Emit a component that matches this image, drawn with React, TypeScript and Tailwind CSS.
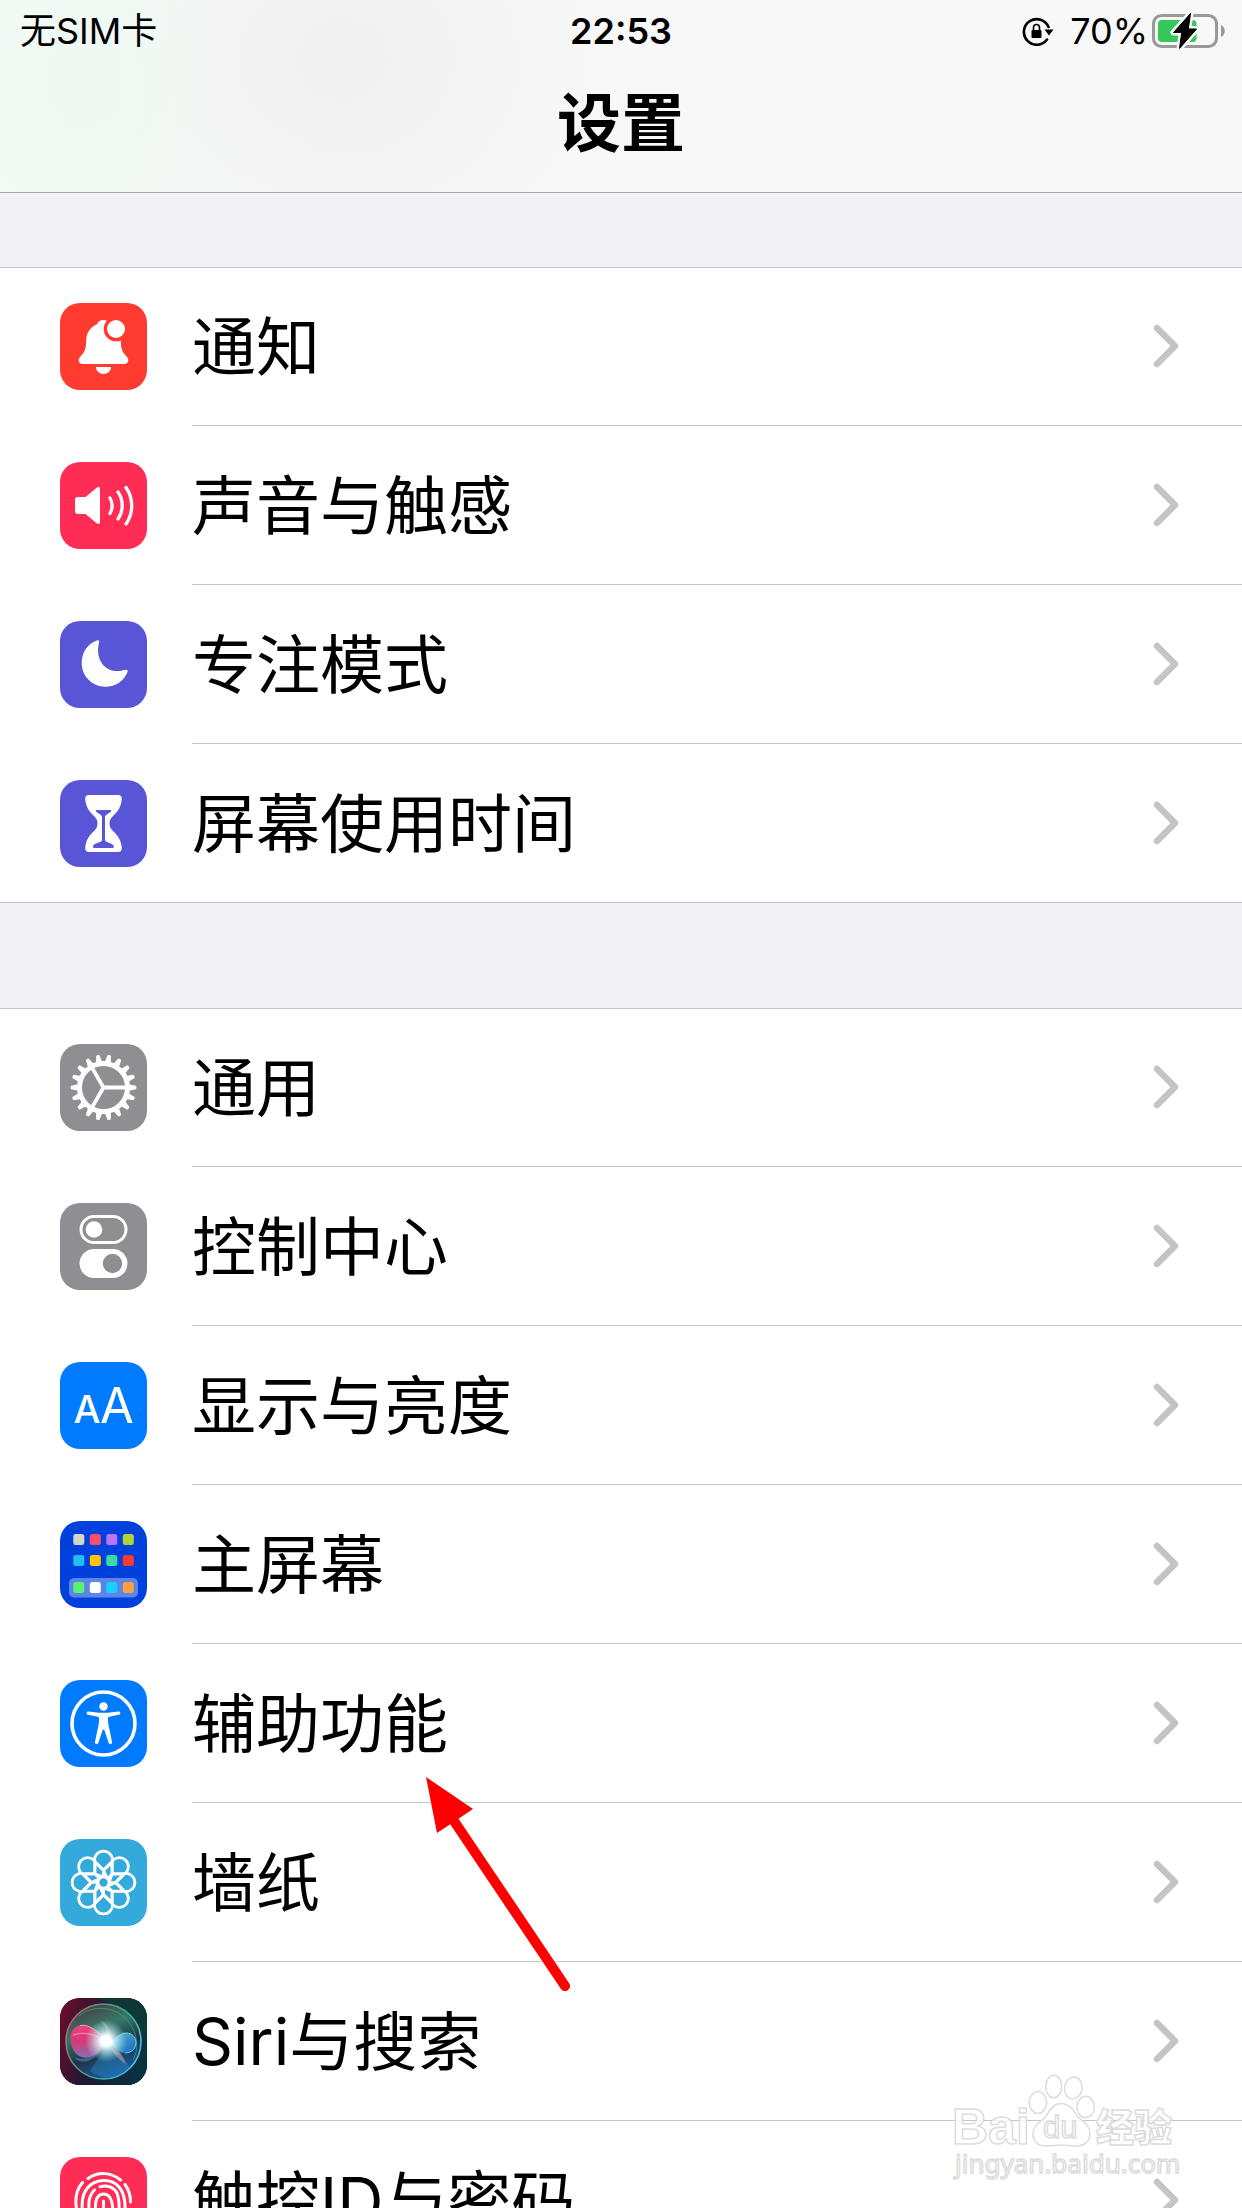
import type { ReactNode } from 'react'

interface SettingItem {
  label: string
  color: string
  icon: ReactNode
  hasPointer?: boolean
}

const toothAngles = Array.from({ length: 18 }, (_, index) => index * 20)
const petalAngles = Array.from({ length: 8 }, (_, index) => index * 45)

const homeApps = [
  ['#d8d4cc', '#ff4f69', '#b873ff', '#b2d235'],
  ['#1cc0fb', '#ffc400', '#3ddba4', '#fc3a30'],
  ['#58f474', '#ffffff', '#1bd0ff', '#ff9f43'],
]
const homeAppRows = [13, 34, 61]

function BellIcon() {
  return (
    <>
      <path
        fill="#fff"
        d="M43.5 17c3 0 5.5 1.6 6.3 4.2C57 24 60.6 30 60.8 37.5c.2 8 1.2 11.500 5.800 16 3 3 1.600 7.500-2 7.500H22.400c-3.600 0-5-4.500-2-7.500 4.600-4.500 5.600-8 5.800-16C26.400 30 30 24 37 21.200 38 18.600 40.500 17 43.500 17z"
      />
      <path fill="#fff" d="M36 64h15c0 4-3.400 7-7.500 7S36 68 36 64z" />
      <circle cx="56" cy="26" r="12.300" fill="#ff3b30" />
      <circle cx="56" cy="26" r="9" fill="#fff" />
    </>
  )
}

function SpeakerIcon() {
  return (
    <>
      <path
        fill="#fff"
        d="M18 35h7.500L37 25.500c1.500-1 3-.5 3 1.500v33c0 2-1.500 2.500-3 1.500L25.500 52H18c-2 0-3-1-3-3V38c0-2 1-3 3-3z"
      />
      <g fill="none" stroke="#fff" strokeWidth="3.300" strokeLinecap="round">
        <path d="M50 36c2.800 4.500 2.800 11 0 15.500" />
        <path d="M58 30c5.600 8 5.600 19 0 27" />
        <path d="M66 25.500c7.600 11 7.600 25.500 0 36.500" />
      </g>
    </>
  )
}

function MoonIcon() {
  return (
    <path
      fill="#fff"
      d="M36.800 19.500c2-.5 2.800.5 2.200 2.300C35 38 44.500 52 60 49.900l5.200-1.200c2.300-.3 3 .9 2.200 2.600C63.500 60.500 55.500 65.700 45.500 65.700c-13.500 0-23.800-10.500-23.800-23.700 0-11 6.300-19.500 15.100-22.500z"
    />
  )
}

function HourglassIcon() {
  return (
    <>
      <path
        fill="#fff"
        d="M29 15h29c2.500 0 4 1.500 3.800 4C61 28 57 32 53 36c-2.500 2.500-3.500 4.500-3.500 7.500s1 5 3.500 7.500c4 4 8 8 8.800 17 .2 2.500-1.300 4-3.800 4H29c-2.500 0-4-1.500-3.800-4 .8-9 4.800-13 8.800-17 2.500-2.500 3.500-4.500 3.500-7.500s-1-5-3.500-7.500c-4-4-8-8-8.800-17-.2-2.500 1.300-4 3.800-4z"
      />
      <path
        fill="#5856d6"
        d="M36.500 30h14c.8 0 1 .8.400 1.400-1.500 1.500-4.900 3.200-5.900 4.800V60.500c1.500 2 6 2.500 8.500 4.800.5.700.3 2.700-.7 2.700H34c-1 0-1.200-2-.700-2.700 2.500-2.300 7.200-2.800 8.700-4.800V36.200c-1-1.600-4.400-3.300-5.900-4.800-.6-.6-.4-1.400.4-1.400z"
      />
    </>
  )
}

function GearIcon() {
  return (
    <g transform="translate(43.500 43.500)">
      <circle r="24" fill="none" stroke="#fff" strokeWidth="5" />
      {toothAngles.map((angle) => (
        <path
          key={angle}
          fill="#fff"
          d="M25-3.200 32.500-1.700Q33.500 0 32.500 1.700L25 3.200z"
          transform={`rotate(${angle})`}
        />
      ))}
      {[0, 120, 240].map((angle) => (
        <path
          key={angle}
          stroke="#fff"
          strokeWidth="3.800"
          d="M0 0H23"
          transform={`rotate(${angle})`}
        />
      ))}
    </g>
  )
}

function TogglesIcon() {
  return (
    <>
      <rect
        x="21"
        y="13.500"
        width="45"
        height="26"
        rx="13"
        fill="none"
        stroke="#fff"
        strokeWidth="3"
      />
      <circle cx="34" cy="26.500" r="8.300" fill="#fff" />
      <rect x="19.500" y="46" width="48" height="29" rx="14.500" fill="#fff" />
      <circle cx="52.500" cy="60.500" r="9.700" fill="#8e8e93" />
    </>
  )
}

function TextSizeIcon() {
  return (
    <g fill="#fff" textAnchor="middle" fontFamily="Inter, sans-serif">
      <text x="27" y="61" fontSize="38" fontWeight="500">
        A
      </text>
      <text x="57" y="61" fontSize="49">
        A
      </text>
    </g>
  )
}

function HomeScreenIcon() {
  return (
    <>
      <rect x="9" y="57" width="69" height="19.500" rx="5" fill="#fff" fillOpacity=".36" />
      {homeApps.map((apps, row) =>
        apps.map((color, column) => (
          <rect
            key={color}
            x={13.3 + column * 16.5}
            y={homeAppRows[row]}
            width="11"
            height="11"
            rx="2.500"
            fill={color}
          />
        )),
      )}
    </>
  )
}

function AccessibilityIcon() {
  return (
    <>
      <circle cx="43.500" cy="43.500" r="31.500" fill="none" stroke="#fff" strokeWidth="3.600" />
      <circle cx="43.500" cy="26.500" r="4.200" fill="#fff" />
      <path
        fill="#fff"
        d="M28.300 31.500l10.700 1.300h9l10.700-1.300c2-.2 2.300 2.800.3 3.200l-9.800 2c-1 .2-1.200.8-1.200 1.800 0 5 .500 7.500 1.500 11l2.500 12.500c.5 2.300-2.700 3-3.400.8L44.500 50.500c-.3-1.300-1.700-1.300-2 0l-4.100 12.300c-.7 2.200-3.900 1.500-3.400-.8l2.500-12.500c1-3.500 1.500-6 1.500-11 0-1-.2-1.600-1.200-1.800l-9.800-2c-2-.4-1.700-3.400.3-3.200z"
      />
    </>
  )
}

function FlowerIcon() {
  return (
    <g
      transform="translate(43.500 43.500)"
      fill="none"
      stroke="#fff"
      strokeWidth="2.700"
      strokeLinejoin="round"
    >
      {petalAngles.map((angle) => (
        <path
          key={angle}
          d="M0-5.500V-12L-8.800-20.500A9 9 0 1 1 8.800-20.500L0-12M-8.800-20.500V-8.800L0-5.500M8.800-20.500V-8.800"
          transform={`rotate(${angle})`}
        />
      ))}
      <circle r="5.500" />
    </g>
  )
}

function SiriIcon() {
  return (
    <>
      <defs>
        <linearGradient id="siriBack" x1="0" y1=".3" x2="1" y2=".6">
          <stop offset="0" stopColor="#650d2b" />
          <stop offset=".45" stopColor="#1c1a35" />
          <stop offset="1" stopColor="#08323f" />
        </linearGradient>
        <linearGradient id="siriOrb" x1=".2" y1="0" x2=".6" y2="1">
          <stop offset="0" stopColor="#4a3438" />
          <stop offset=".35" stopColor="#38786c" />
          <stop offset=".65" stopColor="#1c3444" />
          <stop offset="1" stopColor="#175ca4" />
        </linearGradient>
        <linearGradient id="siriRing" x1="0" y1=".2" x2="1" y2=".7">
          <stop offset="0" stopColor="#b8646c" />
          <stop offset=".6" stopColor="#37a98e" />
          <stop offset="1" stopColor="#51c3ef" />
        </linearGradient>
        <linearGradient id="siriPink" x1="0" y1="0" x2="0" y2="1">
          <stop offset="0" stopColor="#f0437b" />
          <stop offset=".5" stopColor="#d43877" />
          <stop offset="1" stopColor="#8b6fb5" />
        </linearGradient>
        <linearGradient id="siriBlue" x1="0" y1="0" x2="1" y2="1">
          <stop offset="0" stopColor="#5fd0ea" />
          <stop offset="1" stopColor="#1d6fd0" />
        </linearGradient>
        <radialGradient id="siriGlow">
          <stop offset="0" stopColor="#fff" />
          <stop offset=".3" stopColor="#eafcff" stopOpacity=".95" />
          <stop offset="1" stopColor="#a5eeee" stopOpacity="0" />
        </radialGradient>
      </defs>
      <rect width="87" height="87" fill="url(#siriBack)" />
      <path fill="#0c3f33" fillOpacity=".7" d="M36 0h51v44C74 20 60 8 36 0z" />
      <circle cx="43.500" cy="43.500" r="37.500" fill="url(#siriOrb)" />
      <circle cx="43.500" cy="43.500" r="37.500" fill="none" stroke="url(#siriRing)" strokeWidth="1.600" />
      <path fill="none" stroke="#33b08a" strokeOpacity=".7" d="M19 18c14-12 36-9 47 3s14 28 7 41" />
      <path fill="#2d86c4" fillOpacity=".45" d="M30 73C38 60 44 54 50 48c8 6 16 12 20 22-12 12-28 12-40 3z" />
      <path fill="#5d7fb0" fillOpacity=".6" d="M46 46C36 62 22 70 13 58c8 6 22 2 33-12z" />
      <path fill="url(#siriPink)" d="M46 43C38 32 28 26 20 27.500 9 30 9 42 13 51c5 11 18 11 25 3 3-3 5-7 8-11z" />
      <path fill="none" stroke="#ffb3c7" strokeOpacity=".8" d="M46 43C38 32 28 26 20 27.500M13 37c11-4 24 0 33 6" />
      <path fill="url(#siriBlue)" fillOpacity=".85" d="M48 44c7 0 10-9 18-9 7 0 10 5 10 10 0 6-5 10-11 10-7 0-11-7-17-11z" />
      <path fill="none" stroke="#8fe3ff" strokeOpacity=".8" d="M48 44c7 0 10-9 18-9 7 0 10 5 10 10 0 6-5 10-11 10" />
      <path fill="#d5a4a8" fillOpacity=".5" d="M46 44c2-9 0-15-6-22 9 5 12 12 11 20 4 8 12 14 15 24-9-5-14-14-20-22z" />
      <circle cx="46" cy="43" r="21" fill="url(#siriGlow)" />
      <circle cx="46" cy="43" r="6" fill="#fff" fillOpacity=".9" />
    </>
  )
}

function TouchIdIcon() {
  return (
    <g fill="none" stroke="#fff" strokeWidth="3" strokeLinecap="round">
      <path d="M16.500 52c-1.500-9-.5-19 6-26.500" />
      <path d="M28 21.500C38 14.500 51 15 60.500 23" />
      <path d="M65 27.500c4 5.500 5.500 11 5.500 17.500" />
      <path d="M23.500 60C21 48 21.500 38 27.500 31c7.500-9 23.500-10.500 31.500-1C65 37 65.500 47 65 60" />
      <path d="M30 60c-2-12-2-21 4.500-27M40 29.700c8-2 14.500 1 17.200 7C59.500 43 59.500 50 59 60" />
      <path d="M36.500 60c-2-10-2-23 7-23 9.500 0 9.500 13 9 23" />
      <path d="M43.500 44v16" />
    </g>
  )
}

const sections: SettingItem[][] = [
  [
    { label: '通知', color: 'bg-[#ff3b30]', icon: <BellIcon /> },
    { label: '声音与触感', color: 'bg-[#ff2d55]', icon: <SpeakerIcon /> },
    { label: '专注模式', color: 'bg-[#5856d6]', icon: <MoonIcon /> },
    { label: '屏幕使用时间', color: 'bg-[#5856d6]', icon: <HourglassIcon /> },
  ],
  [
    { label: '通用', color: 'bg-[#8e8e93]', icon: <GearIcon /> },
    { label: '控制中心', color: 'bg-[#8e8e93]', icon: <TogglesIcon /> },
    { label: '显示与亮度', color: 'bg-[#007aff]', icon: <TextSizeIcon /> },
    { label: '主屏幕', color: 'bg-[#0040dd]', icon: <HomeScreenIcon /> },
    {
      label: '辅助功能',
      color: 'bg-[#007aff]',
      icon: <AccessibilityIcon />,
      hasPointer: true,
    },
    { label: '墙纸', color: 'bg-[#34aadc]', icon: <FlowerIcon /> },
    { label: 'Siri与搜索', color: 'bg-[#1c1a35]', icon: <SiriIcon /> },
    { label: '触控ID与密码', color: 'bg-[#ff2d55]', icon: <TouchIdIcon /> },
  ],
]

function RotationLock() {
  return (
    <svg viewBox="0 0 32 30" className="h-[30px] w-8" aria-hidden="true">
      <path
        fill="none"
        stroke="#000"
        strokeWidth="2.600"
        strokeLinecap="round"
        d="M26.500 11A12.800 12.800 0 1 0 25 23.500"
      />
      <path d="M22.500 13.500h9L27 19.500z" />
      <rect x="9.500" y="14" width="10" height="8" rx="1" />
      <path fill="none" stroke="#000" strokeWidth="1.600" d="M11.500 14v-2.500a3 3 0 0 1 6 0V14" />
    </svg>
  )
}

function Battery() {
  const bolt = 'M38.500 1.500 21.500 20.500h8.200L27.500 36.500 44.500 17h-8.200z'

  return (
    <svg viewBox="0 0 74 38" className="h-[38px] w-[74px]" aria-hidden="true">
      <rect x="1.500" y="3.500" width="63" height="31" rx="8" fill="none" stroke="#999" strokeWidth="3" />
      <rect x="6" y="8" width="38.500" height="22" rx="4" fill="#34c759" />
      <path fill="#999" d="M69 13c5 2 5 10 0 12z" />
      <path d={bolt} fill="#f8f8f8" stroke="#f8f8f8" strokeWidth="6" strokeLinejoin="round" />
      <path d={bolt} stroke="#000" strokeLinejoin="round" />
    </svg>
  )
}

function StatusBar() {
  return (
    <div className="grid h-[62px] grid-cols-3 items-center px-4 text-[36px] leading-none">
      <span className="pl-1">无SIM卡</span>
      <time className="text-center font-semibold">22:53</time>
      <div className="flex items-center justify-end gap-1">
        <RotationLock />
        <span className="ml-3">70%</span>
        <Battery />
      </div>
    </div>
  )
}

function Pointer() {
  return (
    <svg
      viewBox="0 0 150 220"
      className="pointer-events-none absolute top-[131px] left-[424px] z-10 h-[220px] w-[150px]"
      aria-hidden="true"
    >
      <path stroke="#f00" strokeWidth="10" strokeLinecap="round" d="M28 43 141 211" />
      <path fill="#f00" d="M2 2 49 34 13 58z" />
    </svg>
  )
}

function SettingRow({ label, color, icon, hasPointer }: SettingItem) {
  return (
    <li className="relative">
      <a href="#" className="flex h-[159px] pl-[60px]">
        <span
          className={`my-auto mr-[45px] size-[87px] shrink-0 overflow-hidden rounded-[20px] ${color}`}
        >
          <svg viewBox="0 0 87 87" className="size-full" aria-hidden="true">
            {icon}
          </svg>
        </span>
        <span className="flex flex-1 items-center justify-between border-b border-[#c6c6c8] pr-[62px]">
          <span className="pt-[2px] text-[64px] leading-none whitespace-nowrap">{label}</span>
          <svg viewBox="0 0 28 46" className="h-[46px] w-7" aria-hidden="true">
            <path
              fill="none"
              stroke="#c4c4c6"
              strokeWidth="6.500"
              strokeLinecap="round"
              strokeLinejoin="round"
              d="M5 5 23 23 5 41"
            />
          </svg>
        </span>
      </a>
      {hasPointer && <Pointer />}
    </li>
  )
}

function Watermark() {
  return (
    <svg
      viewBox="0 0 230 115"
      className="pointer-events-none absolute right-[62px] bottom-[23px] h-[115px] w-[230px]"
      fill="#fff"
      fillOpacity=".8"
      stroke="#dcdcdc"
      strokeWidth="1.500"
      aria-hidden="true"
    >
      <ellipse cx="88" cy="32.500" rx="8.700" ry="11" />
      <ellipse cx="103.700" cy="16.500" rx="8" ry="11.300" />
      <ellipse cx="123.300" cy="18" rx="8.700" ry="11" transform="rotate(10 123.300 18)" />
      <ellipse cx="135.700" cy="37" rx="8.700" ry="10.700" />
      <path d="M111 33.500c8 0 12 6 16 12 5 6 13 9 13 18 0 8-6 13-14 12.500-9-1-21-1-30 0-8 .5-13-5-13-12 0-9 8-12 13-18 4-6 7-12.500 15-12.500z" />
      <text x="2" y="74" fontSize="50" fontWeight="700" fontFamily="Liberation Sans, sans-serif">
        Bai
      </text>
      <text x="93" y="68" fontSize="31" fontFamily="Liberation Sans, sans-serif">
        du
      </text>
      <text x="146" y="71" fontSize="38" fontWeight="900" fontFamily="Noto Sans CJK SC, sans-serif">
        经验
      </text>
      <text x="5" y="103" fontSize="26" fontFamily="Noto Sans, sans-serif">
        jingyan.baidu.com
      </text>
    </svg>
  )
}

export default function App() {
  return (
    <div className="relative flex h-screen flex-col overflow-hidden bg-[#f2f1f6] font-['Inter','Noto_Sans_CJK_SC',sans-serif] text-black">
      <header className="shrink-0 border-b border-[#a9a9ad] bg-[#f8f8f8] bg-[radial-gradient(140px_180px_at_80px_80px,#edf9f2,transparent),radial-gradient(260px_220px_at_340px_60px,#f0f0f0,transparent),linear-gradient(to_right,#f5fbf7,#f8f8f8_30%)]">
        <StatusBar />
        <h1 className="flex h-[130px] items-center justify-center pb-2 text-[64px] leading-none font-bold">
          设置
        </h1>
      </header>

      <main className="flex flex-1 flex-col gap-[105px] overflow-y-auto pt-[74px] [scrollbar-width:none]">
        {sections.map((items) => (
          <ul
            key={items[0].label}
            className="shrink-0 bg-white shadow-[inset_0_1px_0_#c6c6c8,inset_0_-1px_0_#c6c6c8]"
          >
            {items.map((item) => (
              <SettingRow key={item.label} {...item} />
            ))}
          </ul>
        ))}
      </main>

      <Watermark />
    </div>
  )
}
